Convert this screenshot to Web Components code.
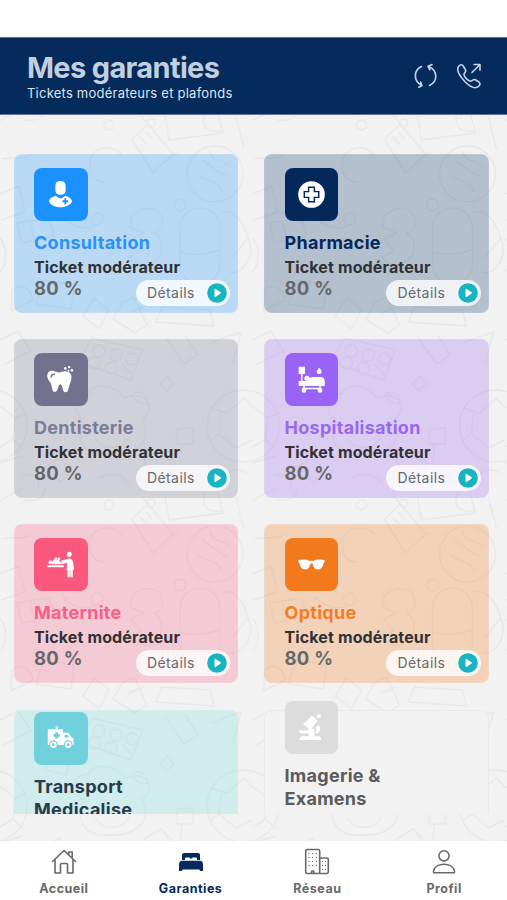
<!DOCTYPE html>
<html lang="fr">
<head>
<meta charset="utf-8">
<title>Mes garanties</title>
<style>
html,body{margin:0;height:100%;overflow:hidden;background:#fff}
body{font-family:Inter,"Liberation Sans",sans-serif}
</style>
</head>
<body>
<garanties-app></garanties-app>
<script>
const ICONS = {
  consult: '<path d="M14 0c3.600 0 5.300 2 5.300 5v4.500c0 3.300-1.900 4.800-5.300 4.800s-5.300-1.500-5.300-4.800V5C8.700 2 10.400 0 14 0zM9 15.200c2 1.500 3.200 2.700 5 2.700s3-1.200 5-2.700c3.500 1 7 3 7 6.300C23.500 25.600 18.500 27.300 14 27.300S4.500 25.600 2 21.500C2 18.200 5.500 16.200 9 15.200z" fill="#fff"/><path d="M19 18v6M16 21h6" stroke="var(--c)" stroke-width="1.900"/>',
  pharm: '<circle cx="14" cy="14" r="13.800" fill="#fff"/><path d="M11 6.500h6v4.500h4.500v6H17v4.500h-6V17H6.500v-6H11z" fill="none" stroke="var(--c)" stroke-width="1.500"/>',
  tooth: '<path d="M.3 10.500c0-4.300 3-6 6.500-5.300 2.500.5 4.900 2.300 7.700 1.100 4-1.700 8-.9 9.900 1.800 1.600 2.700 1 6.300-.3 9.400-1 2-1.400 5-2.200 7.400-.8 2.900-4 3.200-5.200.2-.7-2-1-6.200-2.900-6.200s-2.100 4.200-3.300 6.200c-1.300 2.400-3.900 2.400-4.800-.3-.7-2.300-.9-5-2.100-7.400C2.700 15.500.3 13.300.3 10.500z" fill="#fff"/><path d="M4.200 11.500c.2-2 1.500-3 3.600-2.900" fill="none" stroke="var(--c)" stroke-width="1.500" stroke-linecap="round"/><g fill="#fff"><circle cx="19" cy="2.500" r="1.400"/><circle cx="23" cy="1.200" r="1.200"/><circle cx="22.300" cy="4.900" r="1"/><circle cx="25.800" cy="4.500" r="1.300"/></g>',
  hospital: '<g fill="#fff"><path d="M.7.700h6.500v7.600H.7zM3.200 8h1.500v9H3.200zM.7 15.500h27v5.200H.7z"/><circle cx="9.300" cy="12.700" r="2.700"/><path d="M10 14.800c2-2.500 3.200-3.300 6-3.300h7.500c3 0 4.200 2 4.200 5v1H8zM22 1.800c1.700 2 2.500 3 2.500 4.200 0 3.200-5 3.200-5 0 0-1.200.8-2.200 2.500-4.200zM4.800 22.500h19.500V24H4.800z"/><path d="M5.500 20h1.600v4H5.500zM22 20h1.600v4H22z"/><circle cx="6.200" cy="25.300" r="2.500"/><circle cx="22.800" cy="25.300" r="2.500"/></g>',
  baby: '<g fill="#fff"><path d="M.5 14.800h17v2H.5z"/><circle cx="3.600" cy="11.600" r="2"/><path d="M5 13.700c-.3-2 .4-3 1.600-3.800L9 6.500l1.500.8-1 3 2.600-3.800 1.600.8-1 3.600 2 .6v2.200zM15 9.800l5.500-1.300 2-.7c3 0 4.500 2 4.700 5L28 19.500h-1.300v7.700h-2.500v-7.300h-.5v7.300h-2.500v-7.300h-1.100l1-7.700-6 1.500z"/><circle cx="23" cy="3.800" r="2.500"/><path d="M22 1.300c2-1.300 4.400.8 3.300 3l-2 .2z"/></g>',
  glasses: '<path d="M.2 9.500c4-.8 8.500-1.100 11.600.9 1.500-.7 2.900-.7 4.400 0 3.100-2 7.600-1.700 11.600-.9v1.800c-.9.300-1.200.8-1.500 2-.8 3.700-2.600 5.900-5.500 5.900-3.200 0-4.600-2.200-5.400-5.300-.3-1.200-2.500-1.200-2.800 0-.8 3.100-2.200 5.300-5.400 5.300-2.900 0-4.700-2.200-5.500-5.900-.3-1.200-.6-1.700-1.500-2z" fill="#fff"/>',
  ambulance: '<path d="M.8 4.500h15.700V8H22l3.500 5 2 .8v7H.8zM9 1.500h2.300V5H9z" fill="#fff"/><path d="M18.200 10h2.900l2.200 3h-5.100z" fill="var(--c)"/><path d="M10 7.500v6.500M6.800 10.750h6.500" stroke="var(--c)" stroke-width="3"/><g fill="#fff" stroke="var(--c)" stroke-width="1.200"><circle cx="6.600" cy="20.400" r="4"/><circle cx="22" cy="20.400" r="4"/></g><g fill="var(--c)"><circle cx="6.600" cy="20.400" r="1.500"/><circle cx="22" cy="20.400" r="1.500"/></g>',
  micro: '<g fill="#fff"><path d="M14.500 1.500 20.500 7 12.500 17 5 9.500 8 8.500z"/><circle cx="21.700" cy="2.300" r="2.100"/><path d="M19 13c1.500-1.500 3.500-1.200 3.800.5.500 3-.4 5-2.300 6.500H18c1-2 1.300-4.500 1-7zM1 17h9l4-2 3 1v8h-6v-4H3.500L1 18.700zM3.500 23h19L24.500 27H1z"/></g>'
};

const TILE = `
  <g>
    <circle cx="215" cy="174" r="28"/><path d="M202 160c9 5 14 13 25 16M198 175c9 8 19 3 24 17M210 151c0 11 14 8 20 16"/>
    <rect x="180" y="208" width="40" height="76" rx="20"/><path d="M180 252c12 4 27 2 40-2M222 212c12-3 21 9 26 25 8 20-5 37-18 36M232 258l16-20"/>
    <path d="M132 216c11-12 29-9 30 4 2 8-4 12-8 13 9 5 11 18 2 27-9 7-20 7-27-3l12-6-10-12 13-6-14-6z"/>
    <path d="M132 139l16-15 25 30-20 19zM148 124l-7-8M140 137l7 7M146 132l6 7M151 128l7 8M163 163l15-11"/>
    <path d="M122 155c-9-12-27-8-31 3-5 14 3 24 14 24M62 216c8 11 25 15 34 9"/><circle cx="180" cy="205" r="6"/><circle cx="97" cy="219" r="6"/>
    <path d="M25 120c14 2 21-4 20-14-1-8-12-9-18-2-5 8-16 9-27 17M2 159c14-3 21 1 29-4M0 194l19-8 6 26-24 8M17 223l32-5 5 18-32 7zM30 222l5 20"/>
    <path d="M0 238c7 8 8 25 0 34M12 290c11-9 19 0 21 10l-22 11zM44 280l30 5-3 24-35-5zM94 298l15 12-10 19-16-13z"/>
    <path d="M122 303l12-6 13 28-12 8-22-14zM129 313l15-6M162 307l48 3 4 16-58-4z"/><circle cx="151" cy="123" r="4"/><circle cx="109" cy="125" r="5"/>
    <path d="M165 116l4 24 54-7-6-23M204 113c-2 15 2 19 18 18M236 117l8 32"/>
  </g>
  <g>
    <path d="M92 338l51 12-12 30-52-18zM122 364l10 11"/><circle cx="99" cy="351" r="6"/><circle cx="116" cy="355" r="6"/><circle cx="132" cy="359" r="6"/><circle cx="94" cy="363" r="6"/><circle cx="111" cy="368" r="6"/>
    <path d="M166 338l18 26 14-9-13-20M210 343l31-11-8 31M0 340l18-9 13 20-28 14"/>
    <path d="M89 394c-22-1-13 27-5 25-10 23 1 38 26 36 28 1 42-15 32-35 17-15 1-30-17-22-13-17-35-13-36-4z"/>
    <path d="M95 438c8 14 28 11 34-1M133 394c7-6 17 4 14 10-6 0-13-3-14-10z"/>
    <circle cx="243" cy="426" r="36"/><circle cx="-9" cy="426" r="36"/><path d="M210 408l17 5 17-15 8 9M221 413l-2 21 17 14 16-8M219 434l-9 7M0 406l15 12-2 21-13 8M15 418l12-5M13 439l10 10"/>
    <path d="M144 459l17-10 15 15-26 12zM162 449l13 23M177 429l16-1v16h-16zM182 445l-2 20M45 467l14-9 14 12-13 12zM22 475c20-3 18 9 14 19M198 466l18 3-1 15-19-3z"/>
    <path d="M52 360l19 9-5 26-20-5zM160 384l7-8 7 8-8 7zM0 463l23-7M99 478c12-6 25-4 30 7M228 478c-1-10 12-10 19-5"/>
  </g>`;

function define(name, html, setup) {
  const template = document.createElement('template');
  template.innerHTML = html;
  customElements.define(name, class extends HTMLElement {
    constructor() {
      super();
      this.attachShadow({mode: 'open'}).append(template.content.cloneNode(true));
    }
    connectedCallback() { if (setup) setup(this, this.shadowRoot); }
  });
}

define('doodle-backdrop', `<style>:host{display:block;position:absolute;inset:0;z-index:-1}svg{display:block;width:100%;height:100%}</style>
<svg viewBox="0 0 507 900" aria-hidden="true"><defs><pattern id="p" width="252.500" height="380" y="108" patternUnits="userSpaceOnUse"><g transform="translate(0 -108)" fill="none" stroke="#e8e8e8" stroke-width="1.500" stroke-linejoin="round">${TILE}</g></pattern></defs><rect width="507" height="900" fill="#f2f2f2"/><rect width="507" height="900" fill="url(#p)"/></svg>`);

define('app-header', `<style>
:host{display:flex;align-items:center;box-sizing:border-box;height:78px;margin-top:37px;padding:0 25px 0 27px;background:#052a5c;border:solid #5f7598;border-width:.5px 0;position:relative}
.t{flex:1;padding-top:1px}
h1{margin:0;font-size:29px;line-height:33px;font-weight:700;letter-spacing:-.66px;color:#c3cfdf;white-space:nowrap}
p{margin:0;font-size:13px;line-height:18px;letter-spacing:.23px;color:#dce4ee;white-space:nowrap}
svg{display:block;width:26px;height:26px;fill:none;stroke:#c6d5e5;stroke-width:1.600;stroke-linecap:round;stroke-linejoin:round}
.i{display:flex;gap:17px}
</style><div class="t"><h1><slot name="title"></slot></h1><p><slot name="sub"></slot></p></div>
<div class="i"><svg viewBox="0 0 26 26"><path d="M8.500 3.500C.3 7.500.3 18 8.700 22.500M5.800 24.200l3.200-1.700-1.400-3.400M16.500 22.500c8.200-4 8.700-14.500-.5-18.700M19 1.500l-4 1.800 1.900 3.500"/></svg>
<svg viewBox="0 0 26 26"><path d="M2.500 3.500c2-2.600 4-2 5 0l2 3.400c1 2-1.500 3-1.600 4.500.5 3 4.300 6.500 6.800 6.800 1.500.1 2.500-2.300 4.500-1.500l3.500 2.100c2 1.300 1.500 3.200-.5 4.900-3 2.200-8 .1-13.200-5C3.600 13 .3 7 2.500 3.500zM16 9.500l8-8M18 1.500H24V7.300"/></svg></div>`);

define('detail-pill', `<style>
:host{display:flex;box-sizing:border-box;align-items:center;justify-content:space-between;width:94.500px;height:26px;border-radius:13px;padding:0 3px 0 11.500px;background:#ffffffc9;color:#68696c;font-size:14px;letter-spacing:.4px}
span{padding-bottom:1px}
svg{width:20px;height:20px}
</style><span><slot></slot></span><svg viewBox="0 0 20 20"><circle cx="10" cy="10" r="9.800" fill="#16b5c1"/><path d="M7.500 6.600c0-.7.600-.9 1.100-.6l5 3.300c.5.400.5.900 0 1.300l-5 3.300c-.5.300-1.100.1-1.100-.6z" fill="#fff"/></svg>`);

define('care-card', `<style>
:host{display:flex;flex-direction:column;justify-content:center;box-sizing:border-box;position:relative;height:158.500px;padding:0 20px 0 20.500px;border-radius:8px;background:var(--bg);box-shadow:inset 0 0 0 1px var(--edge,#ffffff18)}
.box{flex:none;display:grid;place-items:center;width:53.500px;height:53.500px;border-radius:8px;background:var(--c);margin-bottom:11px}
.box svg{width:27px;height:27px;overflow:visible}
h2{margin:0;font-size:18px;line-height:22.900px;font-weight:700;letter-spacing:.28px;color:var(--t);white-space:nowrap}
.k{font-size:16px;line-height:20px;padding-top:2px;font-weight:700;letter-spacing:.13px;color:#303136;white-space:nowrap}
.v{font-size:18.500px;line-height:22px;font-weight:700;letter-spacing:.3px;color:#66676b}
detail-pill{position:absolute;right:8px;bottom:6.500px}
:host([peek]) :is(.k,.v,detail-pill){visibility:hidden}
</style><div class="box"></div><h2><slot></slot></h2><div class="k">Ticket modérateur</div><div class="v">80 %</div><detail-pill>Détails</detail-pill>`,
(el, root) => {
  root.querySelector('.box').innerHTML = '<svg viewBox="0 0 28 28">' + ICONS[el.getAttribute('icon')] + '</svg>';
  if (el.hasAttribute('peek')) root.querySelectorAll('.k, .v, detail-pill').forEach(n => { n.textContent = '\u00a0'; });
});

define('card-list', `<style>
:host{display:grid;box-sizing:border-box;height:698.500px;overflow:hidden;grid-template-columns:224.500px 224.500px;column-gap:26px;row-gap:26.500px;align-content:start;padding:39.300px 0 0 13.500px}
::slotted([peek]){top:.6px}
</style><slot></slot>`);

define('nav-item', `<style>
:host{display:flex;flex-direction:column;align-items:center;flex:1;color:#68696b;font-size:12.500px;font-weight:700;letter-spacing:.5px;line-height:16px;padding:7px 0 0 1px;gap:5px}
:host([active]){color:#052a5c}
svg{width:28px;height:28px;fill:none;stroke:currentColor;stroke-width:1.600;stroke-linejoin:round;stroke-linecap:round}
</style><svg viewBox="0 0 28 28"></svg><span><slot></slot></span>`,
(el, root) => {
  root.querySelector('svg').innerHTML = {
    home: '<path d="M2.500 13.500 14 2.500l11.500 11M5 11.500V25h5.500v-8.500q0-1 1-1h5q1 0 1 1V25H23V11.500M18.800 7V4h3.400v6"/>',
    bed: '<path d="M5 12V7.200C5 5.800 5.800 5 7.200 5h13.600C22.200 5 23 5.800 23 7.200V12h-3v-1.500q0-1-1-1h-3q-1 0-1 1h-2q0-1-1-1H9q-1 0-1 1V12z" fill="currentColor" stroke="none"/><path d="M5 12.800h18c2 0 3 1.700 3 3.500V23h-2.500l-1.300-1.500H5.800L4.500 23H2v-6.700c0-1.800 1-3.500 3-3.500z" fill="currentColor" stroke="none"/>',
    city: '<rect x="2.700" y="1.500" width="14" height="24" rx="1.500"/><path d="M16.700 10H24q1.300 0 1.300 1.300V24q0 1.500-1.500 1.500h-7.100"/><path d="M6 5.500v16M9.700 5.500v16M13.400 5.500v16M19.500 13.500v9M22.500 13.500v9" stroke-width="1.300" stroke-dasharray=".1 3.900"/><path d="M8.700 25v-2h2v2"/>',
    user: '<circle cx="14" cy="7.800" r="5.100"/><path d="M4.500 24.800c-.9 0-1.200-.8-1-1.600C5.500 14 22.500 14 24.500 23.200c.2.800-.1 1.600-1 1.600z"/>'
  }[el.getAttribute('icon')];
});

define('nav-bar', `<style>:host{display:flex;box-sizing:border-box;height:59.500px;margin-top:auto;background:#fff}</style><slot></slot>`);

define('garanties-app', `<style>
:host{display:flex;flex-direction:column;width:507px;height:900px;position:relative;isolation:isolate}
:host::before{content:"";position:absolute;inset:0 0 auto;height:37px;background:#fff}
</style>
<doodle-backdrop></doodle-backdrop>
<app-header><span slot="title">Mes garanties</span><span slot="sub">Tickets modérateurs et plafonds</span></app-header>
<card-list>
<care-card icon="consult" style="--c:#1b91ff;--t:#2b91f5;--bg:#1b91ff42">Consultation</care-card>
<care-card icon="pharm" style="--c:#05285b;--t:#05285b;--bg:#05326842">Pharmacie</care-card>
<care-card icon="tooth" style="--c:#72728f;--t:#7b7b9a;--bg:#72729342">Dentisterie</care-card>
<care-card icon="hospital" style="--c:#9963f5;--t:#9868f0;--bg:#9963f542">Hospitalisation</care-card>
<care-card icon="baby" style="--c:#fa587c;--t:#fa5d88;--bg:#fa588242">Maternite</care-card>
<care-card icon="glasses" style="--c:#f27a1c;--t:#f27e25;--bg:#f27a1c42">Optique</care-card>
<care-card peek icon="ambulance" style="--c:#70d1dc;--t:#263b4c;--bg:#70dce242">Transport<br>Medicalise</care-card>
<care-card peek icon="micro" style="--c:#dcdcdc;--t:#5b5b5d;--bg:#f2f2f2;--edge:#e9e9e9">Imagerie &amp;<br>Examens<br>Specialises</care-card>
</card-list>
<nav-bar>
<nav-item icon="home">Accueil</nav-item>
<nav-item icon="bed" active>Garanties</nav-item>
<nav-item icon="city">Réseau</nav-item>
<nav-item icon="user">Profil</nav-item>
</nav-bar>`);
</script>
</body>
</html>
